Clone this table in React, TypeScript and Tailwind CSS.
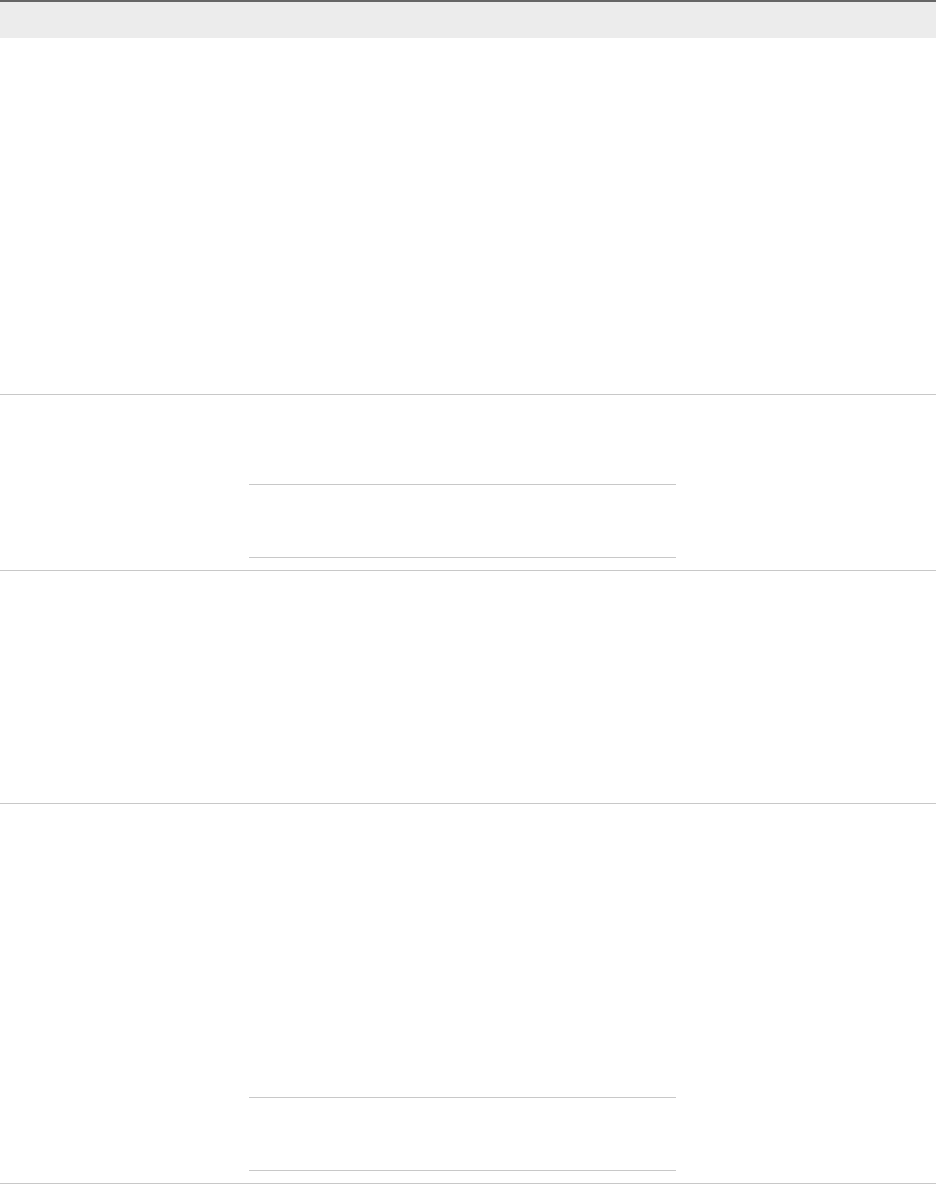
export default function App() {
  return (
    <div className="w-[936px] min-h-[1184px] bg-white font-['Liberation_Sans',sans-serif]">
      {/* header */}
      <div className="h-[38px] border-t-2 border-[#666666] bg-[#ececec]" />

      {/* row 1 */}
      <div className="h-[357px] border-b border-[#c8c8c8]" />

      {/* row 2 */}
      <div className="h-[176px] border-b border-[#c8c8c8] flex">
        <div className="w-[249px]" />
        <div className="w-[427px] flex flex-col">
          <div className="h-[90px] border-b border-[#c8c8c8]" />
          <div className="h-[73px] border-b border-[#c8c8c8]" />
        </div>
      </div>

      {/* row 3 */}
      <div className="h-[233px] border-b border-[#c8c8c8]" />

      {/* row 4 */}
      <div className="h-[380px] border-b border-[#c8c8c8] flex">
        <div className="w-[249px]" />
        <div className="w-[427px] flex flex-col">
          <div className="h-[294px] border-b border-[#c8c8c8]" />
          <div className="h-[73px] border-b border-[#c8c8c8]" />
        </div>
      </div>
    </div>
  )
}
